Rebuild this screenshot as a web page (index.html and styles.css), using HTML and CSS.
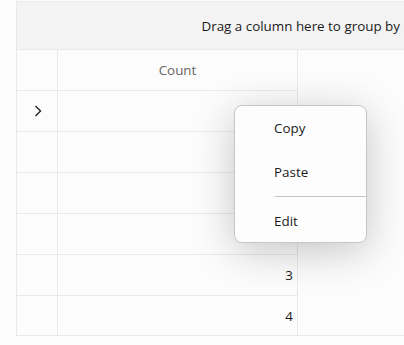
FILE: index.html
```html
<!DOCTYPE html>
<html lang="en">
<head>
    <meta charset="UTF-8">
    <meta name="viewport" content="width=device-width, initial-scale=1.0">
    <title>Data Grid</title>
    <link rel="stylesheet" href="styles.css">
</head>
<body>
    <div class="grid">
        <div class="group-panel">Drag a column here to group by</div>

        <div class="grid-body">
            <div class="table">
                <div class="row header">
                    <div class="indicator"></div>
                    <div class="cell head-cell">Count</div>
                </div>
                <div class="row">
                    <div class="indicator">
                        <svg width="8" height="12" viewBox="0 0 8 12"><path d="M1.5 1 L6.5 6 L1.5 11" fill="none" stroke="#222" stroke-width="1.4"/></svg>
                    </div>
                    <div class="cell"></div>
                </div>
                <div class="row">
                    <div class="indicator"></div>
                    <div class="cell"></div>
                </div>
                <div class="row">
                    <div class="indicator"></div>
                    <div class="cell"></div>
                </div>
                <div class="row">
                    <div class="indicator"></div>
                    <div class="cell"></div>
                </div>
                <div class="row">
                    <div class="indicator"></div>
                    <div class="cell">3</div>
                </div>
                <div class="row last">
                    <div class="indicator"></div>
                    <div class="cell">4</div>
                </div>
            </div>
        </div>
    </div>

    <!-- Context menu -->
    <div class="context-menu">
        <div class="menu-item">Copy</div>
        <div class="menu-item">Paste</div>
        <div class="menu-sep"></div>
        <div class="menu-item">Edit</div>
    </div>
</body>
</html>
```

FILE: styles.css
```css
body {
    margin: 0;
    padding: 0;
    background: #fcfcfc;
    font-family: "Open Sans", "Noto Sans", sans-serif;
    color: #1b1b1b;
}

.grid {
    margin: 1px 0 0 16px;
    border: 1px solid #e9e9e9;
    border-right: none;
    height: 335px;
    box-sizing: border-box;
    display: flex;
    flex-direction: column;
}

.group-panel {
    height: 47px;
    flex-shrink: 0;
    background: #f3f3f3;
    border-bottom: 1px solid #ebebeb;
    display: flex;
    align-items: center;
    justify-content: flex-end;
    padding-right: 4px;
    font-size: 13.4px;
    color: #1b1b1b;
}

.grid-body {
    flex: 1;
    display: flex;
}

.table {
    width: 280px;
    border-right: 1px solid #e9e9e9;
    display: flex;
    flex-direction: column;
}

.row {
    display: flex;
    height: 40px;
    flex-shrink: 0;
    border-bottom: 1px solid #e9e9e9;
}

.row.last {
    flex: 1;
    border-bottom: none;
}

.indicator {
    width: 41px;
    border-right: 1px solid #e9e9e9;
    display: flex;
    align-items: center;
    justify-content: center;
    padding-left: 2px;
    box-sizing: border-box;
}

.cell {
    flex: 1;
    display: flex;
    align-items: center;
    justify-content: flex-end;
    padding-right: 4px;
    font-size: 13.4px;
}

.head-cell {
    justify-content: center;
    padding-right: 0;
    color: #666;
}

.context-menu {
    position: absolute;
    left: 234px;
    top: 105px;
    width: 133px;
    height: 138px;
    box-sizing: border-box;
    background: #fdfdfd;
    border: 1px solid #c6c6c6;
    border-radius: 8px;
    box-shadow: 0 8px 40px rgba(0, 0, 0, 0.22);
    overflow: hidden;
}

.menu-item {
    height: 44px;
    line-height: 44px;
    padding-left: 39px;
    font-size: 13.4px;
    color: #1b1b1b;
}

.menu-sep {
    height: 1px;
    background: #c4c4c4;
    margin: 2px 0 2px 40px;
}
```
